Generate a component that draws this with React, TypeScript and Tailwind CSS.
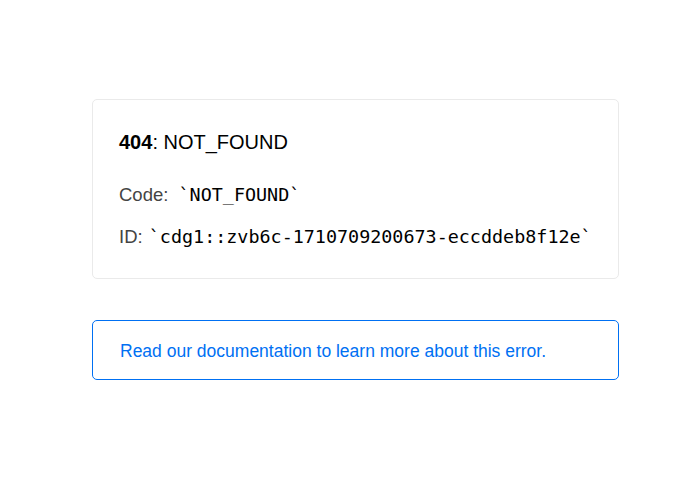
export default function App() {
  const sans = { fontFamily: '"Liberation Sans", Arial, sans-serif' };
  return (
    <div className="min-h-[486px] bg-white pt-[99px] pl-[92px]" style={sans}>
      <div className="w-[527px] h-[180px] rounded-[5px] border border-[#eaeaea] px-[26px] pt-[30px]">
        <h1 className="text-[20px] leading-[24px] text-black font-normal">
          <strong className="font-bold">404</strong>: NOT_FOUND
        </h1>
        <p className="mt-[29px] text-[18.5px] leading-[24px] text-[#444]">
          Code:{" "}
          <code className="ml-[5px] text-black font-['DejaVu_Sans_Mono',monospace] text-[18.4px] leading-[24px]">`NOT_FOUND`</code>
        </p>
        <p className="mt-[18px] text-[18.5px] leading-[24px] text-[#444]">
          ID:{" "}
          <code className="ml-[1px] text-black font-['DejaVu_Sans_Mono',monospace] text-[18.4px] leading-[24px]">`cdg1::zvb6c-1710709200673-eccddeb8f12e`</code>
        </p>
      </div>
      <div className="mt-[41px] w-[527px] h-[60px] rounded-[5px] border border-[#0070f3] px-[27px] pt-[18px]">
        <a className="block text-[17.5px] leading-[24px] text-[#0070f3]" href="#">
          Read our documentation to learn more about this error.
        </a>
      </div>
    </div>
  );
}
